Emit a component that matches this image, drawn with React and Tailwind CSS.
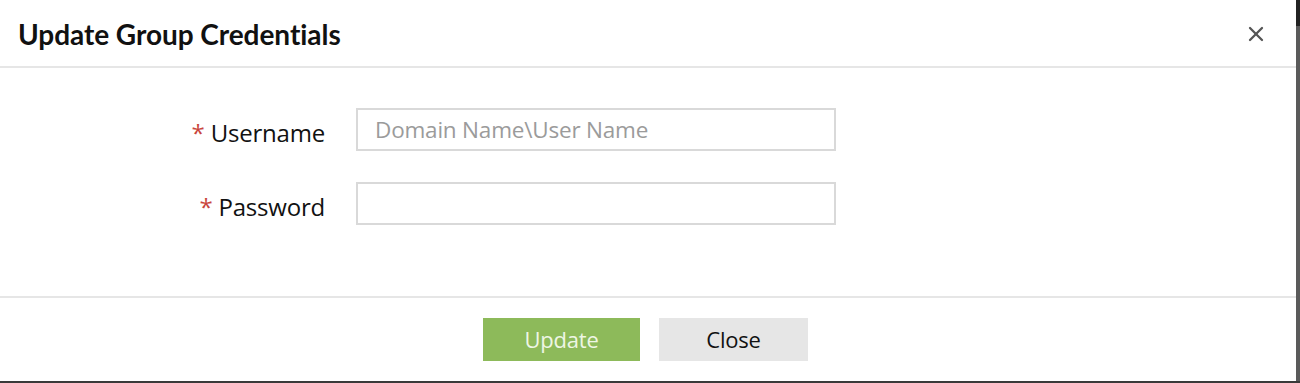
import { X } from 'lucide-react'

export default function App() {
  return (
    <div className="w-[1300px] h-[383px] flex flex-col bg-white overflow-hidden">
      <div className="flex flex-1 min-h-0">
        <div className="flex-1 flex flex-col bg-white">
          {/* Header */}
          <div className="h-[68px] flex items-center justify-between pl-[18px] pr-[28px] border-b-2 border-[#e6e6e6]">
            <h1 className="text-[28px] font-bold text-[#111] font-['Lato','Noto_Sans',sans-serif] tracking-[-0.05px] mt-[1px]">
              Update Group Credentials
            </h1>
            <X className="w-[24px] h-[24px] text-[#555] mt-[1px]" strokeWidth={2.3} />
          </div>

          {/* Form */}
          <div className="h-[228px] pt-[40px] font-['Open_Sans','Noto_Sans',sans-serif]">
            <div className="flex items-center h-[43px]">
              <label className="w-[326px] pr-[1px] text-right text-[24px] text-[#111] tracking-[-0.2px] mt-[6px]">
                <span className="text-[#c9463d] mr-[6px]">*</span>Username
              </label>
              <input
                type="text"
                placeholder="Domain Name\User Name"
                className="ml-[30px] w-[480px] h-[43px] border-2 border-[#d9d9d9] px-[17px] text-[22.5px] tracking-[-0.2px] placeholder-[#9b9b9b] outline-none"
              />
            </div>
            <div className="flex items-center h-[43px] mt-[31px]">
              <label className="w-[326px] pr-[1px] text-right text-[24px] text-[#111] tracking-[-0.2px] mt-[6px]">
                <span className="text-[#c9463d] mr-[6px]">*</span>Password
              </label>
              <input
                type="password"
                className="ml-[30px] w-[480px] h-[43px] border-2 border-[#d9d9d9] px-[17px] text-[22px] outline-none"
              />
            </div>
          </div>

          {/* Footer */}
          <div className="flex-1 border-t-2 border-[#e6e6e6] flex justify-center gap-[19px] pt-[20px] pr-[5px] font-['Open_Sans','Noto_Sans',sans-serif]">
            <button className="w-[157px] h-[43px] bg-[#8dba5a] text-[#eef6e4] text-[22px] tracking-[-0.2px]">Update</button>
            <button className="w-[149px] h-[43px] bg-[#e6e6e6] text-[#111] text-[22px] tracking-[-0.2px]">Close</button>
          </div>
        </div>
        <div className="w-[4px] flex flex-col">
          <div className="h-[26px] bg-[#222]" />
          <div className="flex-1 bg-[#5a5a5a]" />
        </div>
      </div>
      <div className="h-[2px] bg-[#3a3a3a]" />
    </div>
  )
}
